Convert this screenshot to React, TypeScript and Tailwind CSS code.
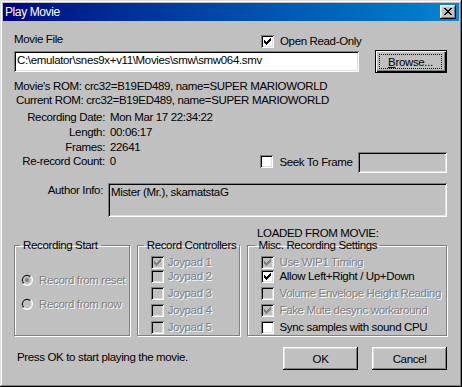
import React from 'react'

const sunken =
  'shadow-[inset_1px_1px_#808080,inset_-1px_-1px_#fff,inset_2px_2px_#000,inset_-2px_-2px_#dfdfdf]'
const raised =
  'shadow-[inset_-1px_-1px_#000,inset_1px_1px_#fff,inset_-2px_-2px_#808080,inset_2px_2px_#dfdfdf]'
const dim = 'text-[#808080] [text-shadow:1px_1px_0_#fff]'

// pixel tops of the 7 columns of the classic check glyph
const tick = [2, 3, 4, 3, 2, 1, 0]

function Check({ on, off }: { on?: boolean; off?: boolean }) {
  return (
    <div
      className={`w-[13px] h-[13px] shrink-0 ${sunken} ${off ? 'bg-[#c0c0c0]' : 'bg-white'}`}
    >
      {on && (
        <svg width="13" height="13" viewBox="0 0 13 13" shapeRendering="crispEdges">
          <path
            d={tick.map((t, i) => `M${3 + i} ${3 + t}h1v3h-1z`).join('')}
            fill={off ? '#808080' : '#000'}
          />
        </svg>
      )}
    </div>
  )
}

function Radio({ on, off }: { on?: boolean; off?: boolean }) {
  return (
    <svg width="12" height="12" viewBox="0 0 12 12" className="shrink-0">
      <circle cx="6" cy="6" r="6" fill="#fff" />
      <path d="M1.76 10.24A6 6 0 0 1 10.24 1.76L6 6Z" fill="#808080" />
      <circle cx="6" cy="6" r="5" fill="#dfdfdf" />
      <path d="M2.46 9.54A5 5 0 0 1 9.54 2.46L6 6Z" fill="#000" />
      <circle cx="6" cy="6" r="4" fill={off ? '#c0c0c0' : '#fff'} />
      {on && <circle cx="6" cy="6" r="2" fill={off ? '#808080' : '#000'} />}
    </svg>
  )
}

function Option({
  label,
  on,
  off,
  gap,
  className = '',
}: {
  label: string
  on?: boolean
  off?: boolean
  gap: string
  className?: string
}) {
  return (
    <div className={`flex items-center h-[14px] ${gap} ${className}`}>
      <Check on={on} off={off} />
      <span className={`whitespace-nowrap ${off ? dim : ''}`}>{label}</span>
    </div>
  )
}

function Group({
  title,
  className = '',
  legend = 'ml-[5px]',
  children,
}: {
  title: string
  className?: string
  legend?: string
  children: React.ReactNode
}) {
  return (
    <fieldset
      className={`border border-[#808080] shadow-[inset_1px_1px_#fff,1px_1px_#fff] h-[97px] min-w-0 ${className}`}
    >
      <legend className={`px-[3px] leading-[12px] whitespace-nowrap ${legend}`}>{title}</legend>
      {children}
    </fieldset>
  )
}

function Button({ label, wide = 'w-[75px]' }: { label: string; wide?: string }) {
  return (
    <button className={`${wide} h-[23px] bg-[#c0c0c0] ${raised} flex items-center justify-center`}>
      {label}
    </button>
  )
}

export default function App() {
  return (
    <div className="w-[462px] h-[387px] bg-[#c0c0c0] p-[3px] font-['Liberation_Sans',Arial,sans-serif] text-[11.5px] tracking-[-0.35px] leading-[14px] text-black shadow-[inset_-1px_-1px_#000,inset_1px_1px_#dfdfdf,inset_-2px_-2px_#808080,inset_2px_2px_#fff] select-none">
      <div className="h-[18px] flex items-center justify-between bg-linear-to-r from-[#000080] to-[#1084d0] pl-[2px] pr-[3px]">
        <span className="text-white text-[12px] tracking-[-0.4px]">Play Movie</span>
        <button className={`w-[16px] h-[14px] bg-[#c0c0c0] ${raised}`}>
          <svg width="16" height="14" viewBox="0 0 16 14" shapeRendering="crispEdges">
            <path
              d="M4 3h2v1h-2zM10 3h2v1h-2zM5 4h2v1h-2zM9 4h2v1h-2zM6 5h4v1h-4zM7 6h2v1h-2zM6 7h4v1h-4zM5 8h2v1h-2zM9 8h2v1h-2zM4 9h2v1h-2zM10 9h2v1h-2z"
              fill="#000"
            />
          </svg>
        </button>
      </div>

      <div className="pl-[11px] pr-[12px]">
        <div className="mt-[11px] h-[18px] flex items-start">
          <div className="w-[247px]">Movie File</div>
          <div className="mt-[2px] flex items-center gap-[6px]">
            <Check on />
            <span>Open Read-Only</span>
          </div>
        </div>

        <div className="h-[23px] flex items-center">
          <div className={`w-[345px] h-[21px] bg-white ${sunken} pl-[3px] pt-[2px] whitespace-nowrap`}>
            C:\emulator\snes9x+v11\Movies\smw\smw064.smv
          </div>
          <button className="ml-[16px] w-[72px] h-[23px] border border-black bg-[#c0c0c0] shadow-[inset_1px_1px_#fff,inset_-1px_-1px_#000,inset_-2px_-2px_#808080] p-[3px] pr-[4px] flex">
            <span className="flex-1 border border-dotted border-black flex items-center justify-center">
              <span>
                <u className="underline-offset-[1px]">B</u>rowse...
              </span>
            </span>
          </button>
        </div>

        <div className="mt-[6px] whitespace-nowrap">Movie's ROM: crc32=B19ED489, name=SUPER MARIOWORLD</div>
        <div className="pl-[2px] whitespace-nowrap">Current ROM: crc32=B19ED489, name=SUPER MARIOWORLD</div>

        <div className="mt-[3px] leading-[15px]">
          <div className="flex h-[15px]">
            <div className="w-[91px] text-right whitespace-nowrap">Recording Date:</div>
            <div className="pl-[5px]">Mon Mar 17 22:34:22</div>
          </div>
          <div className="flex h-[15px]">
            <div className="w-[91px] text-right">Length:</div>
            <div className="pl-[5px]">00:06:17</div>
          </div>
          <div className="flex h-[14px]">
            <div className="w-[91px] text-right">Frames:</div>
            <div className="pl-[5px]">22641</div>
          </div>
          <div className="flex items-start h-[19px]">
            <div className="w-[91px] text-right whitespace-nowrap">Re-record Count:</div>
            <div className="w-[156px] pl-[5px]">0</div>
            <div className="w-[98px] h-[15px] flex items-center gap-[6px] leading-[14px]">
              <Check />
              <span>Seek To Frame</span>
            </div>
            <div className={`w-[89px] h-[21px] mt-[-2px] bg-[#c0c0c0] ${sunken}`} />
          </div>
        </div>

        <div className="mt-[10px] flex items-start">
          <div className="w-[89px] text-right">Author Info:</div>
          <div className={`ml-[5px] w-[339px] h-[34px] bg-[#c0c0c0] ${sunken} pl-[3px] pt-[2px]`}>
            Mister (Mr.), skamatstaG
          </div>
        </div>

        <div className="mt-[10px] h-[12px] leading-[12px] pl-[243px] whitespace-nowrap">LOADED FROM MOVIE:</div>

        <div className="flex gap-[7px]">
          <Group title="Recording Start" className="w-[116px]">
            <div className="pl-[6px]">
              <div className={`mt-[22px] h-[14px] flex items-center gap-[6px] ${dim}`}>
                <Radio on off />
                <span className="whitespace-nowrap">Record from reset</span>
              </div>
              <div className={`mt-[10px] h-[14px] flex items-center gap-[6px] ${dim}`}>
                <Radio off />
                <span className="whitespace-nowrap">Record from now</span>
              </div>
            </div>
          </Group>

          <Group title="Record Controllers" className="w-[104px]" legend="ml-[6px]">
            <div className="pl-[13px]">
              <Option label="Joypad 1" on off gap="gap-[4px]" className="mt-[4px]" />
              <Option label="Joypad 2" off gap="gap-[4px]" />
              <Option label="Joypad 3" off gap="gap-[4px]" className="mt-[3px]" />
              <Option label="Joypad 4" off gap="gap-[4px]" className="mt-[3px]" />
              <Option label="Joypad 5" off gap="gap-[4px]" className="mt-[3px]" />
            </div>
          </Group>

          <Group title="Misc. Recording Settings" className="w-[200px]" legend="ml-[7px]">
            <div className="pl-[13px]">
              <Option label="Use WIP1 Timing" on off gap="gap-[5px]" className="mt-[4px]" />
              <Option label="Allow Left+Right / Up+Down" on gap="gap-[5px]" />
              <Option label="Volume Envelope Height Reading" off gap="gap-[5px]" className="mt-[3px]" />
              <Option label="Fake Mute desync workaround" on off gap="gap-[5px]" className="mt-[3px]" />
              <Option label="Sync samples with sound CPU" gap="gap-[5px]" className="mt-[3px]" />
            </div>
          </Group>
        </div>

        <div className="mt-[11px] flex items-start justify-between">
          <div className="pt-[3px] pl-[3px]">Press OK to start playing the movie.</div>
          <div className="flex gap-[14px]">
            <Button label="OK" />
            <Button label="Cancel" />
          </div>
        </div>
      </div>
    </div>
  )
}
